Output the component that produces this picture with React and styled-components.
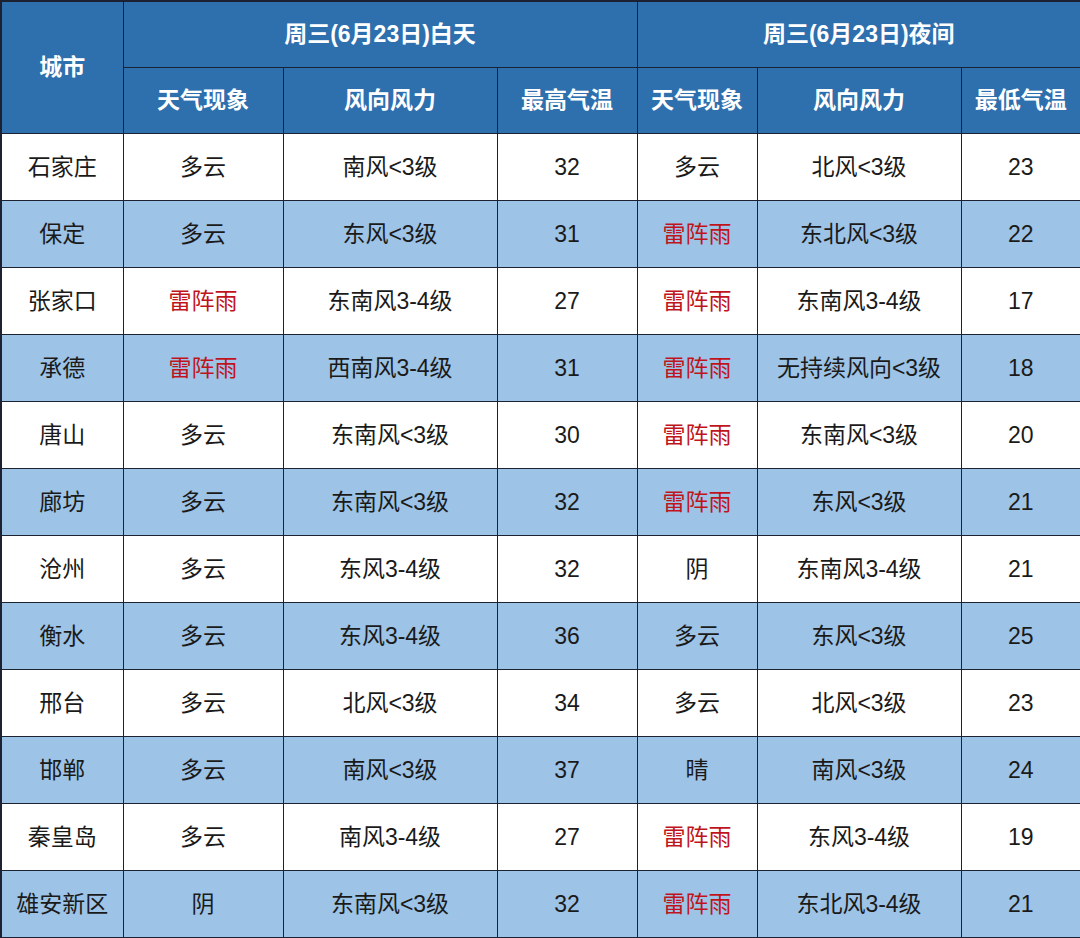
import React from "react";
import styled, { createGlobalStyle } from "styled-components";

const GlobalStyle = createGlobalStyle`
  html, body {
    margin: 0;
    padding: 0;
    background: #ffffff;
  }
  body {
    font-family: "Liberation Sans", "Noto Sans CJK SC", sans-serif;
  }
`;

const days = [
  ["石家庄", "多云", "南风<3级", "32", "多云", "北风<3级", "23"],
  ["保定", "多云", "东风<3级", "31", "雷阵雨", "东北风<3级", "22"],
  ["张家口", "雷阵雨", "东南风3-4级", "27", "雷阵雨", "东南风3-4级", "17"],
  ["承德", "雷阵雨", "西南风3-4级", "31", "雷阵雨", "无持续风向<3级", "18"],
  ["唐山", "多云", "东南风<3级", "30", "雷阵雨", "东南风<3级", "20"],
  ["廊坊", "多云", "东南风<3级", "32", "雷阵雨", "东风<3级", "21"],
  ["沧州", "多云", "东风3-4级", "32", "阴", "东南风3-4级", "21"],
  ["衡水", "多云", "东风3-4级", "36", "多云", "东风<3级", "25"],
  ["邢台", "多云", "北风<3级", "34", "多云", "北风<3级", "23"],
  ["邯郸", "多云", "南风<3级", "37", "晴", "南风<3级", "24"],
  ["秦皇岛", "多云", "南风3-4级", "27", "雷阵雨", "东风3-4级", "19"],
  ["雄安新区", "阴", "东南风<3级", "32", "雷阵雨", "东北风3-4级", "21"],
];

const widths = [122, 160, 214, 140, 120, 204, 120];

const Table = styled.table`
  width: 1080px;
  border-collapse: collapse;
  table-layout: fixed;
  border: 2px solid #1d2233;
`;

const HeadCell = styled.th`
  height: 65px;
  padding: 0;
  background: #2e6fae;
  color: #ffffff;
  font-family: "Liberation Sans", "Noto Sans CJK SC", sans-serif;
  font-size: 23px;
  line-height: 1;
  font-weight: 700;
  text-align: center;
  vertical-align: middle;
  border: 1.5px solid #1d2233;
`;

const Cell = styled.td`
  height: 66px;
  padding: 0;
  background: ${(p) => (p.$shade ? "#9dc3e6" : "#ffffff")};
  color: ${(p) => (p.$red ? "#c0141c" : "#1a1a1a")};
  font-family: "Liberation Sans", "Noto Sans CJK SC", sans-serif;
  font-size: 23px;
  line-height: 1;
  font-weight: 400;
  text-align: center;
  vertical-align: middle;
  border: 1.5px solid #1d2233;
  white-space: nowrap;
`;

const App = () => {
  return (
    <>
      <GlobalStyle />
      <Table>
        <colgroup>
          {widths.map((w, i) => (
            <col key={i} style={{ width: w }} />
          ))}
        </colgroup>
        <thead>
          <tr>
            <HeadCell rowSpan={2}>城市</HeadCell>
            <HeadCell colSpan={3}>周三(6月23日)白天</HeadCell>
            <HeadCell colSpan={3}>周三(6月23日)夜间</HeadCell>
          </tr>
          <tr>
            <HeadCell>天气现象</HeadCell>
            <HeadCell>风向风力</HeadCell>
            <HeadCell>最高气温</HeadCell>
            <HeadCell>天气现象</HeadCell>
            <HeadCell>风向风力</HeadCell>
            <HeadCell>最低气温</HeadCell>
          </tr>
        </thead>
        <tbody>
          {days.map((row, r) => (
            <tr key={row[0]}>
              {row.map((v, c) => (
                <Cell key={c} $shade={r % 2 === 1} $red={v === "雷阵雨"}>
                  {v}
                </Cell>
              ))}
            </tr>
          ))}
        </tbody>
      </Table>
    </>
  );
};

export default App;
